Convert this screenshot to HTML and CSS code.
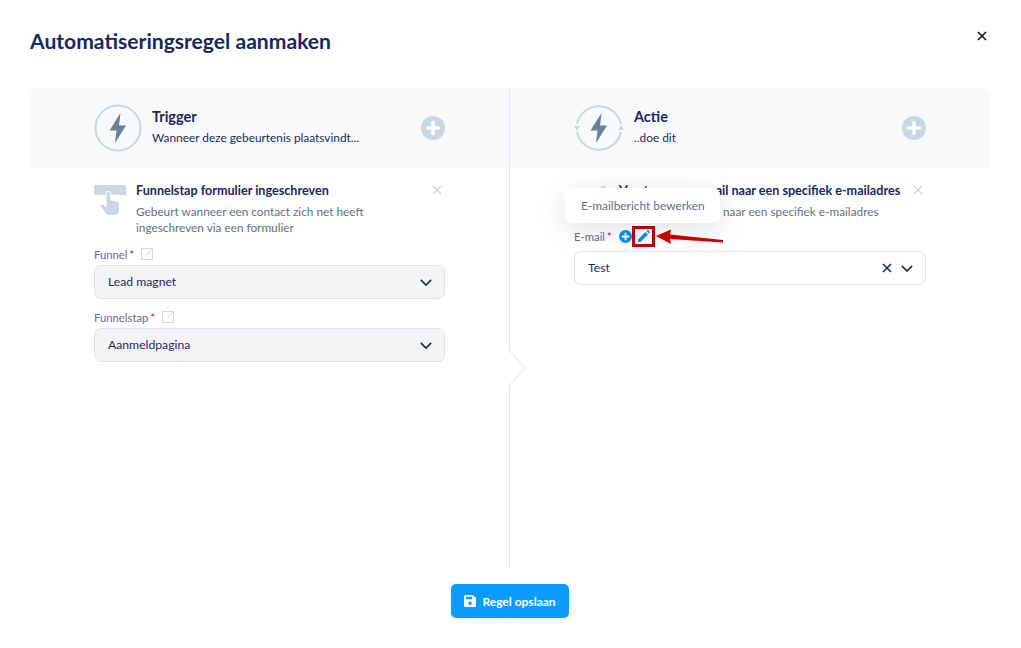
FILE: index.html
```html
<!DOCTYPE html>
<html lang="nl">
<head>
<meta charset="utf-8">
<title>Automatiseringsregel aanmaken</title>
<link rel="stylesheet" href="styles.css">
</head>
<body>
<div class="modal">
  <header class="modal-head">
    <h1 class="modal-title">Automatiseringsregel aanmaken</h1>
    <svg class="modal-close" width="10" height="10" viewBox="0 0 10 10"><path d="M1 1l8 8M9 1l-8 8" stroke="#111" stroke-width="1.6" fill="none"/></svg>
  </header>
  <main class="board">
    <section class="col col-left">
      <div class="col-head">
        <svg class="head-icon" width="48" height="48" viewBox="0 0 48 48"><circle cx="24" cy="24" r="22.5" fill="none" stroke="#c9d6e4" stroke-width="2"/><path d="M26.5 9L15.5 26.5H22.5L21 39L32 21.5H25Z" fill="#6a7f9a"/></svg>
        <div class="head-text"><h2 class="head-title">Trigger</h2><p class="head-sub">Wanneer deze gebeurtenis plaatsvindt...</p></div>
        <svg class="head-plus" width="24" height="24" viewBox="0 0 24 24"><circle cx="12" cy="12" r="12" fill="#c9d6e4"/><path d="M12 6.500v11M6.500 12h11" stroke="#fff" stroke-width="3.500" stroke-linecap="round"/></svg>
      </div>
      <div class="col-body">
        <div class="rule">
          <svg class="rule-icon" width="32" height="31" viewBox="0 0 32 31"><path d="M1 0H31a1 1 0 0 1 1 1V10H24.500V9.500H13V10H1a1 1 0 0 1-1-1V1a1 1 0 0 1 1-1Z" fill="#c9d6e4"/><path d="M12 8.500a2.300 2.300 0 0 1 4.600 0V15l7 1.500c1.500.4 2 1.200 2 2.500v6c0 3-2 5.500-5 5.500h-5c-2 0-3.500-1-4.500-2.500L6.500 21.500c-1-1.800 1.500-3.500 3-2L12 22Z" fill="#c9d6e4" stroke="#fff" stroke-width="1"/></svg>
          <div class="rule-text">
            <h3 class="rule-title">Funnelstap formulier ingeschreven</h3>
            <p class="rule-desc">Gebeurt wanneer een contact zich net heeft ingeschreven via een formulier</p>
          </div>
          <svg class="rule-close" width="10" height="10" viewBox="0 0 10 10"><path d="M1 1l8 8M9 1l-8 8" stroke="#ccd7e3" stroke-width="1.300" fill="none"/></svg>
        </div>
        <div class="field first-field">
          <div class="label">Funnel<span class="req">*</span><svg class="ext" width="12" height="12" viewBox="0 0 12 12"><path d="M7 .5H.5v11h11V5M5 7L11.500.5M7.500.5h4v4" fill="none" stroke="#ccd6e2"/></svg></div>
          <div class="select filled"><span class="select-value">Lead magnet</span><svg class="chev" width="12" height="7" viewBox="0 0 14 8"><path d="M1 1l6 6 6-6" fill="none" stroke="#1b2a5e" stroke-width="1.900"/></svg></div>
        </div>
        <div class="field">
          <div class="label">Funnelstap<span class="req">*</span><svg class="ext" width="12" height="12" viewBox="0 0 12 12"><path d="M7 .5H.5v11h11V5M5 7L11.500.5M7.500.5h4v4" fill="none" stroke="#ccd6e2"/></svg></div>
          <div class="select filled"><span class="select-value">Aanmeldpagina</span><svg class="chev" width="12" height="7" viewBox="0 0 14 8"><path d="M1 1l6 6 6-6" fill="none" stroke="#1b2a5e" stroke-width="1.900"/></svg></div>
        </div>
      </div>
      <svg class="notch" width="18" height="34" viewBox="0 0 18 34"><path d="M0 0H1L17 17 1 34H0Z" fill="#fff"/><path d="M.5 0L16.500 17 .5 34" fill="none" stroke="#e2e6ea"/></svg>
    </section>
    <section class="col col-right">
      <div class="col-head">
        <svg class="head-icon" width="50" height="50" viewBox="0 0 50 50"><path d="M3 21A22.500 22.500 0 0 1 47 21M47 29A22.500 22.500 0 0 1 3 29" fill="none" stroke="#c9d6e4" stroke-width="2"/><path d="M0 23H6L3 28Z M44 27H50L47 22Z" fill="#c9d6e4"/><path d="M27.500 10L16.500 27.500H23.500L22 40L33 22.500H26Z" fill="#6a7f9a"/></svg>
        <div class="head-text"><h2 class="head-title">Actie</h2><p class="head-sub">..doe dit</p></div>
        <svg class="head-plus" width="24" height="24" viewBox="0 0 24 24"><circle cx="12" cy="12" r="12" fill="#c9d6e4"/><path d="M12 6.500v11M6.500 12h11" stroke="#fff" stroke-width="3.500" stroke-linecap="round"/></svg>
      </div>
      <div class="col-body">
        <div class="rule rule-action">
          <svg class="rule-icon-small" width="31" height="30" viewBox="0 0 31 30"><path d="M24 5L31 1V10H24Z" fill="#c9d6e4"/></svg>
          <div class="rule-text">
            <h3 class="rule-title">Verstuur een e-mail naar een specifiek e-mailadres</h3>
            <p class="rule-desc">Verstuur een e-mail naar een specifiek e-mailadres</p>
          </div>
          <svg class="rule-close" width="10" height="10" viewBox="0 0 10 10"><path d="M1 1l8 8M9 1l-8 8" stroke="#ccd7e3" stroke-width="1.300" fill="none"/></svg>
        </div>
        <div class="field mail-field">
          <div class="label mail-label">E-mail<span class="req">*</span>
            <svg class="mail-add" width="13" height="13" viewBox="0 0 13 13"><circle cx="6.500" cy="6.500" r="6.500" fill="#0b8fe8"/><path d="M6.500 3.500v6M3.500 6.500h6" stroke="#fff" stroke-width="1.800" stroke-linecap="round"/></svg>
            <span class="mail-edit"><svg width="13" height="13" viewBox="0 0 13 13"><path d="M1 9.500L8.500 2l2.500 2.500L3.500 12H1ZM9.500 1l.6-.5a1 1 0 0 1 1.300 0l1 1a1 1 0 0 1 0 1.300l-.6.600Z" fill="#0b8fe8"/></svg></span>
          </div>
          <div class="select"><span class="select-value">Test</span><span class="select-tools"><svg width="10" height="10" viewBox="0 0 10 10"><path d="M1 1l8 8M9 1l-8 8" stroke="#1b2a5e" stroke-width="1.600" fill="none"/></svg><svg class="chev" width="12" height="7" viewBox="0 0 14 8"><path d="M1 1l6 6 6-6" fill="none" stroke="#1b2a5e" stroke-width="1.900"/></svg></span></div>
        </div>
      </div>
      <div class="tooltip">E-mailbericht bewerken</div>
      <svg class="arrow" width="70" height="18" viewBox="0 0 70 18"><path d="M0 7L15 0.500L14 5.500L67 11V13.500L14 10L15 15Z" fill="#c40000"/></svg>
    </section>
  </main>
  <footer class="modal-foot">
    <button class="save" type="button"><svg width="12" height="12" viewBox="0 0 12 12"><path fill-rule="evenodd" d="M1.200 0H9L12 3V10.800A1.200 1.200 0 0 1 10.800 12H1.200A1.200 1.200 0 0 1 0 10.800V1.200A1.200 1.200 0 0 1 1.200 0ZM2 1.700V4.300H8V1.700ZM6 6.500A1.800 1.800 0 1 0 6 10.100 1.800 1.800 0 0 0 6 6.500Z" fill="#fff"/></svg>Regel opslaan</button>
  </footer>
</div>
</body>
</html>
```
FILE: styles.css
```css
* { box-sizing: border-box; }
html, body { margin: 0; height: 100%; background: #fff; }
body { font-family: "Lato", "Liberation Sans", sans-serif; color: #1b2a5e; overflow: hidden; }
h1, h2, h3, p { margin: 0; }
svg { display: block; flex: none; }

.modal { width: 1021px; height: 648px; padding: 0 31px 0 30px; }
.modal-head { height: 88px; display: flex; justify-content: space-between; padding-top: 29px; }
.modal-title { font-size: 21.100px; line-height: 24px; font-weight: 700; color: #14295f; }
.modal-close { margin: 2px 3px 0 0; }

.board { display: grid; grid-template-columns: 480px 480px; height: 480px; }
.col { position: relative; display: flex; flex-direction: column; }
.col-left { border-right: 1px solid #e2e6ea; }

.col-head { height: 80px; background: #f8f9fb; display: flex; align-items: center; padding: 0 64px; }
.col-left .col-head { border-radius: 8px 0 0 0; padding-right: 64px; }
.col-right .col-head { border-radius: 0 8px 0 0; }
.head-text { flex: 1; padding: 0 0 2px 10px; }
.head-title { font-size: 14.500px; line-height: 18px; font-weight: 700; color: #14295f; }
.head-sub { font-size: 11.850px; line-height: 16px; margin-top: 4px; color: #1b2a5e; }

.col-body { padding: 16px 64px 0; }
.rule { display: flex; align-items: flex-start; }
.rule-icon { margin-top: 1px; }
.rule-text { flex: 1; padding-left: 10px; width: 0; }
.rule-title { font-size: 12.600px; line-height: 14px; font-weight: 700; color: #14295f; white-space: nowrap; }
.rule-desc { font-size: 11.800px; line-height: 16px; margin-top: 6px; color: #5f7089; max-width: 250px; }
.rule-close { margin: 1px 3px 0 0; }
.rule-action .rule-text { padding-left: 14px; }
.rule-action .rule-desc { max-width: none; white-space: nowrap; }

.field { margin-top: 10px; }
.first-field { margin-top: 10px; }
.label { display: flex; align-items: center; height: 16px; margin-bottom: 3px; font-size: 11.300px; color: #5f7089; }
.req { color: #e5004f; font-size: 11px; margin-left: 2px; }
.ext { margin-left: 7px; }

.select { height: 34px; display: flex; align-items: center; justify-content: space-between; padding: 0 12px 0 13px; border: 1px solid #dfe3e8; border-radius: 7px; font-size: 12.200px; color: #1b2a5e; background: #fff; }
.filled { background: #f3f4f6; }
.select-value { padding-bottom: 2px; }
.select-tools { display: flex; align-items: center; gap: 9px; }

.mail-field { margin-top: 6px; }
.mail-label { margin-bottom: 4px; height: 21px; }
.mail-add { margin-left: 7px; }
.mail-edit { width: 23px; height: 21px; border: 3px solid #c00000; display: flex; align-items: center; justify-content: center; }

.notch { position: absolute; right: -18px; top: 263px; }

.tooltip { position: absolute; left: 55px; top: 100px; width: 155px; height: 35px; padding-left: 16px; display: flex; align-items: center; background: #fff; border-radius: 7px; font-size: 11.900px; color: #5f7089; box-shadow: 0 6px 30px rgba(0, 0, 0, .12); }
.arrow { position: absolute; left: 146px; top: 141px; }

.modal-foot { display: flex; justify-content: center; padding-top: 16px; }
.save { width: 118px; height: 34px; border: 0; border-radius: 5px; background: #0a9bff; color: #fff; font-family: inherit; font-size: 12px; font-weight: 700; display: flex; align-items: center; justify-content: center; gap: 6px; }
```
